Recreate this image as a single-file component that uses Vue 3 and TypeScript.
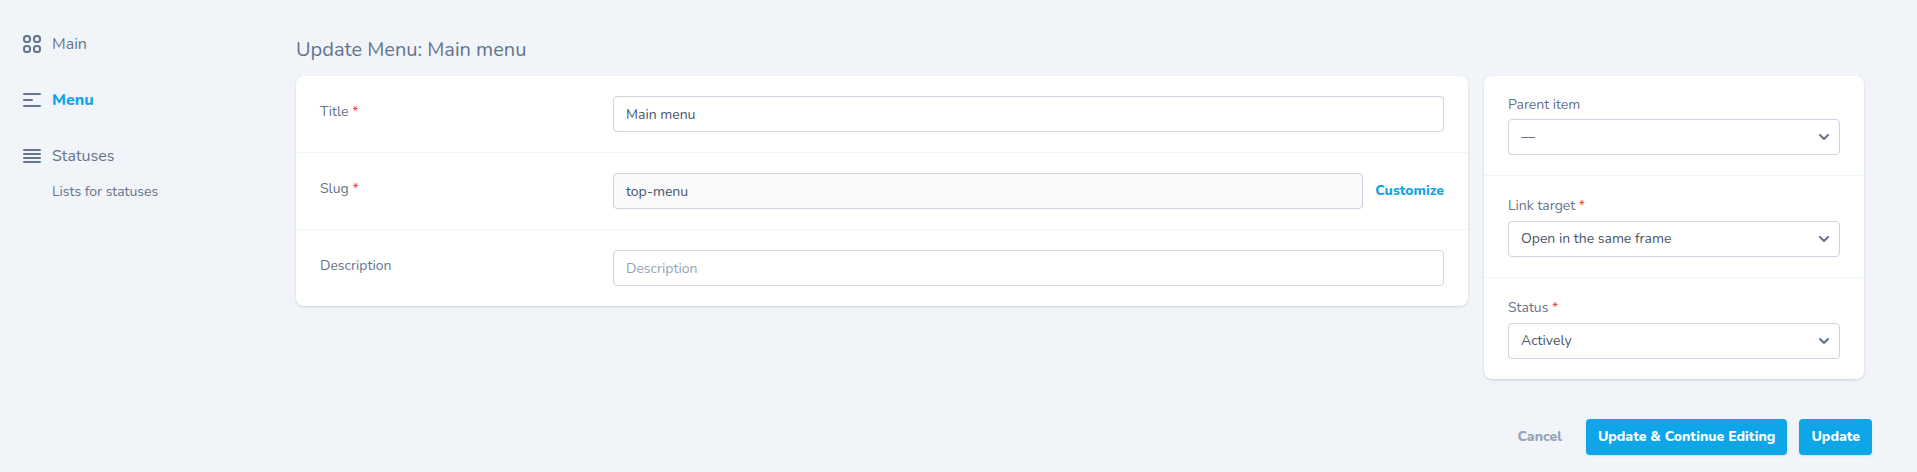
<script setup lang="ts">
import { ref } from 'vue'

interface NavItem {
  label: string
  icon: string
  active?: boolean
  children?: string[]
}

interface SelectField {
  id: string
  label: string
  required: boolean
  options: string[]
}

const tile = (x: number, y: number) =>
  `M${x} ${y + 2.5}a2.5 2.5 0 012.5-2.5h1a2.5 2.5 0 012.5 2.5v1a2.5 2.5 0 01-2.5 2.5h-1a2.5 2.5 0 01-2.5-2.5z`

const nav: NavItem[] = [
  { label: 'Main', icon: tile(4, 4) + tile(14, 4) + tile(4, 14) + tile(14, 14) },
  { label: 'Menu', icon: 'M4 6h16M4 12h8m-8 6h16', active: true },
  {
    label: 'Statuses',
    icon: 'M4 6h16M4 10h16M4 14h16M4 18h16',
    children: ['Lists for statuses'],
  },
]

const selects: SelectField[] = [
  { id: 'parent', label: 'Parent item', required: false, options: ['—'] },
  { id: 'target', label: 'Link target', required: true, options: ['Open in the same frame', 'Open in a new window'] },
  { id: 'status', label: 'Status', required: true, options: ['Actively', 'Inactive'] },
]

const title = ref('Main menu')
const slug = ref('top-menu')
const description = ref('')
const slugLocked = ref(true)
</script>

<template>
  <div class="layout">
    <nav class="sidebar" aria-label="Sections">
      <div v-for="item in nav" :key="item.label" class="nav-group">
        <a href="#" class="nav-link" :class="{ active: item.active }">
          <svg class="nav-icon" viewBox="0 0 24 24" aria-hidden="true">
            <path :d="item.icon" />
          </svg>
          <span>{{ item.label }}</span>
        </a>
        <a v-for="child in item.children" :key="child" href="#" class="nav-child">{{ child }}</a>
      </div>
    </nav>

    <main class="content">
      <h1 class="heading">Update Menu: Main menu</h1>
      <form @submit.prevent>
        <div class="columns">
          <div class="column wide">
            <section class="card">
              <div class="row">
                <label class="row-label" for="title">Title <span class="required">*</span></label>
                <div class="row-field">
                  <input id="title" v-model="title" class="control" type="text" />
                </div>
              </div>
              <div class="row">
                <label class="row-label" for="slug">Slug <span class="required">*</span></label>
                <div class="row-field">
                  <input id="slug" v-model="slug" class="control" type="text" :readonly="slugLocked" />
                  <button class="link-button" type="button" @click="slugLocked = !slugLocked">Customize</button>
                </div>
              </div>
              <div class="row">
                <label class="row-label" for="description">Description</label>
                <div class="row-field">
                  <input id="description" v-model="description" class="control" type="text" placeholder="Description" />
                </div>
              </div>
            </section>
          </div>

          <div class="column narrow">
            <section class="card">
              <div v-for="field in selects" :key="field.id" class="stack">
                <label class="stack-label" :class="{ mandatory: field.required }" :for="field.id">
                  {{ field.label }} <span v-if="field.required" class="required">*</span>
                </label>
                <div class="select-wrap">
                  <select :id="field.id" class="control select">
                    <option v-for="option in field.options" :key="option">{{ option }}</option>
                  </select>
                  <svg class="chevron" viewBox="0 0 10 6" aria-hidden="true">
                    <path d="M1 1l4 4 4-4" />
                  </svg>
                </div>
              </div>
            </section>
          </div>
        </div>

        <div class="actions">
          <button class="button ghost" type="button">Cancel</button>
          <button class="button primary" type="button">Update &amp; Continue Editing</button>
          <button class="button primary" type="submit">Update</button>
        </div>
      </form>
    </main>
  </div>
</template>

<style>
body {
  margin: 0;
  background: #f1f5f9;
}
</style>

<style scoped>
.layout,
.layout * {
  box-sizing: border-box;
}

.layout {
  display: flex;
  font-family: Nunito, Lato, "Open Sans", sans-serif;
  font-size: 14px;
  line-height: 20px;
  color: #64748b;
}

.sidebar {
  flex: 0 0 288px;
  padding: 28px 20px 0;
}

.nav-group {
  margin-bottom: 24px;
}

.nav-link {
  display: flex;
  align-items: center;
  gap: 8px;
  height: 32px;
  font-size: 16px;
  color: #64748b;
  text-decoration: none;
}

.nav-link.active {
  font-weight: 800;
  color: #0ea5e9;
}

.nav-icon {
  width: 24px;
  height: 24px;
  fill: none;
  stroke: #64748b;
  stroke-width: 2;
  stroke-linecap: round;
  stroke-linejoin: round;
}

.nav-child {
  display: block;
  padding: 10px 0 0 32px;
  color: #64748b;
  text-decoration: none;
}

.content {
  flex: 1;
  min-width: 0;
  padding: 36px 45px 16px 0;
}

.heading {
  margin: 0 8px 12px;
  font-size: 20px;
  line-height: 28px;
  font-weight: 400;
}

.columns {
  display: flex;
  align-items: flex-start;
}

.column {
  padding: 0 8px;
}

.wide {
  width: 75%;
}

.narrow {
  width: 25%;
}

.card {
  background: #fff;
  border-radius: 8px;
  box-shadow: 0 1px 3px rgba(0, 0, 0, 0.1), 0 1px 2px rgba(0, 0, 0, 0.06);
}

.row {
  display: flex;
}

.row + .row,
.stack + .stack {
  border-top: 1px solid #f1f5f9;
}

.row-label {
  width: 25%;
  padding: 26px 24px 0;
}

.row-field {
  display: flex;
  gap: 12px;
  width: 75%;
  padding: 20px 24px;
}

.required {
  color: #ef4444;
}

.control {
  flex: 1;
  width: 100%;
  min-width: 0;
  height: 36px;
  margin: 0;
  padding: 0 12px;
  border: 1px solid #cbd5e1;
  border-radius: 4px;
  background: #fff;
  font: inherit;
  color: #475569;
}

.control:read-only:not(select) {
  background: #f8fafc;
}

.control::placeholder {
  color: #94a3b8;
  opacity: 1;
}

.stack {
  padding: 20px 24px;
}

.stack-label {
  display: block;
  margin-bottom: 6px;
  line-height: 17px;
}

.mandatory {
  line-height: 19px;
}

.select-wrap {
  position: relative;
}

.select {
  display: block;
  appearance: none;
}

.chevron {
  position: absolute;
  top: 15px;
  right: 11px;
  width: 10px;
  height: 6px;
  overflow: visible;
  fill: none;
  stroke: #64748b;
  stroke-width: 2;
  stroke-linecap: round;
  stroke-linejoin: round;
  pointer-events: none;
}

.link-button {
  padding: 0;
  border: 0;
  background: none;
  font: inherit;
  font-weight: 800;
  color: #0ea5e9;
  cursor: pointer;
}

.actions {
  display: flex;
  justify-content: flex-end;
  gap: 12px;
  margin-top: 40px;
}

.button {
  height: 36px;
  padding: 0 12px;
  border: 0;
  border-radius: 4px;
  font: inherit;
  font-weight: 800;
  cursor: pointer;
}

.ghost {
  background: none;
  color: #94a3b8;
}

.primary {
  background: #0ea5e9;
  color: #fff;
  box-shadow: 0 1px 2px rgba(0, 0, 0, 0.1);
}
</style>
